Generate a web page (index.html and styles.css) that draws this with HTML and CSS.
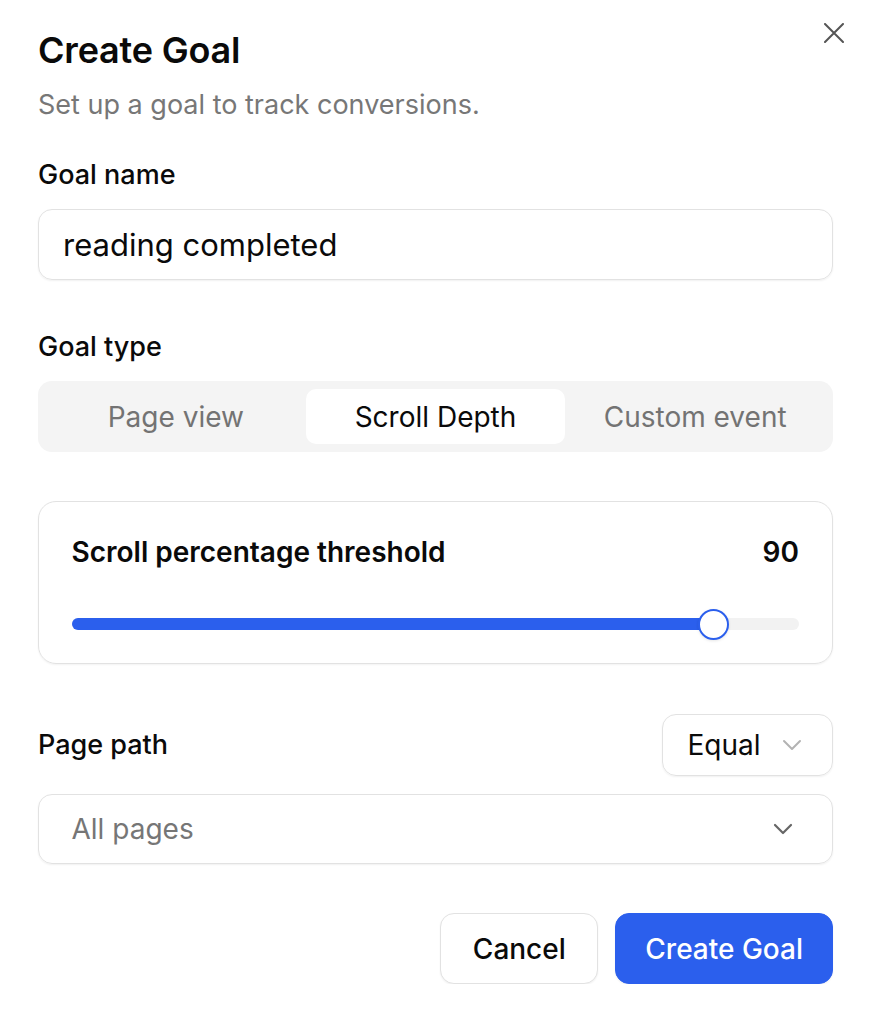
FILE: index.html
```html
<!DOCTYPE html>
<html lang="en">
<head>
<meta charset="utf-8">
<title>Create Goal</title>
<link rel="stylesheet" href="styles.css">
</head>
<body>
<div class="dialog">
  <button class="close" aria-label="Close">
    <svg width="20" height="20" viewBox="0 0 20 20" fill="none" stroke="#555" stroke-width="2" stroke-linecap="round"><path d="M1 1L19 19M19 1L1 19"/></svg>
  </button>
  <h1 class="title">Create Goal</h1>
  <p class="subtitle">Set up a goal to track conversions.</p>

  <div class="label label-name">Goal name</div>
  <div class="input">reading completed</div>

  <div class="label label-type">Goal type</div>
  <div class="segmented">
    <div class="seg">Page view</div>
    <div class="seg active">Scroll Depth</div>
    <div class="seg">Custom event</div>
  </div>

  <div class="card">
    <div class="card-head">
      <span>Scroll percentage threshold</span>
      <span>90</span>
    </div>
    <div class="slider">
      <div class="fill" style="width:88.3%"></div>
      <div class="thumb" style="left:88.3%"></div>
    </div>
  </div>

  <div class="path-row">
    <span class="label">Page path</span>
    <div class="mini-select">
      <span>Equal</span>
      <svg width="20" height="12" viewBox="0 0 20 12" fill="none" stroke="#b3b3b3" stroke-width="2" stroke-linecap="round" stroke-linejoin="round"><path d="M2 2L10 10L18 2"/></svg>
    </div>
  </div>
  <div class="select">
    <span>All pages</span>
    <svg width="20" height="12" viewBox="0 0 20 12" fill="none" stroke="#666" stroke-width="2.2" stroke-linecap="round" stroke-linejoin="round"><path d="M2 2L10 10L18 2"/></svg>
  </div>

  <div class="actions">
    <button class="btn">Cancel</button>
    <button class="btn primary">Create Goal</button>
  </div>
</div>
</body>
</html>
```

FILE: styles.css
```css
* { box-sizing: border-box; }
html, body { margin: 0; padding: 0; background: #fff; }
body {
  font-family: Inter, "Noto Sans", "Liberation Sans", sans-serif;
  color: #0a0a0a;
}
.dialog {
  position: relative;
  padding: 28px 37px 0 38px;
}
.close {
  position: absolute;
  top: 23px;
  right: 26px;
  width: 20px;
  height: 20px;
  padding: 0;
  border: 0;
  background: none;
  display: block;
}
.close svg { display: block; }
.title {
  margin: 0;
  font-size: 36px;
  line-height: 44px;
  font-weight: 600;
  letter-spacing: -0.2px;
}
.subtitle {
  margin: 15px 0 0;
  font-size: 27px;
  line-height: 36px;
  color: #777;
}
.label {
  font-size: 27px;
  line-height: 36px;
  font-weight: 500;
  color: #0a0a0a;
}
.label-name { margin-top: 34px; }
.input {
  margin-top: 16px;
  height: 71px;
  border: 1.5px solid #e2e2e2;
  border-radius: 14px;
  box-shadow: 0 1px 2px rgba(0,0,0,0.06);
  padding: 0 24px;
  display: flex;
  align-items: center;
  font-size: 31px;
}
.label-type { margin-top: 49px; }
.segmented {
  margin-top: 16px;
  height: 71px;
  background: #f4f4f4;
  border-radius: 14px;
  padding: 8px;
  display: grid;
  grid-template-columns: 1fr 1fr 1fr;
}
.seg {
  display: flex;
  align-items: center;
  justify-content: center;
  font-size: 28px;
  color: #737373;
  border-radius: 10px;
}
.seg.active {
  background: #fff;
  color: #0a0a0a;
}
.card {
  margin-top: 49px;
  height: 163px;
  border: 1.5px solid #e2e2e2;
  border-radius: 18px;
  box-shadow: 0 1px 2px rgba(0,0,0,0.05);
  padding: 32px 33px 0 32.5px;
}
.card-head {
  display: flex;
  justify-content: space-between;
  font-size: 28px;
  line-height: 36px;
  font-weight: 600;
}
.slider {
  position: relative;
  margin-top: 48px;
  height: 12px;
  border-radius: 6px;
  background: #f2f2f2;
}
.fill {
  height: 100%;
  border-radius: 6px;
  background: #2b5fed;
}
.thumb {
  position: absolute;
  top: 50%;
  width: 31px;
  height: 31px;
  margin: -15.5px 0 0 -15.5px;
  border-radius: 50%;
  background: #fff;
  border: 2px solid #2b5fed;
  box-shadow: 0 1px 3px rgba(0,0,0,0.1);
}
.path-row {
  margin-top: 50px;
  display: flex;
  justify-content: space-between;
  align-items: center;
}
.mini-select {
  width: 171px;
  height: 62px;
  border: 1.5px solid #e2e2e2;
  border-radius: 14px;
  box-shadow: 0 1px 2px rgba(0,0,0,0.06);
  display: flex;
  align-items: center;
  justify-content: space-between;
  padding: 0 30px 0 24.5px;
  font-size: 28px;
}
.select {
  margin-top: 18px;
  height: 70px;
  border: 1.5px solid #e2e2e2;
  border-radius: 14px;
  box-shadow: 0 1px 2px rgba(0,0,0,0.06);
  display: flex;
  align-items: center;
  justify-content: space-between;
  padding: 0 39px 0 32.5px;
  font-size: 28px;
  color: #767676;
}
.actions {
  margin-top: 49px;
  display: flex;
  justify-content: flex-end;
  gap: 17px;
}
.btn {
  height: 71px;
  border-radius: 14px;
  font-family: inherit;
  font-size: 28px;
  font-weight: 500;
  padding: 0 31.5px;
  border: 1.5px solid #e2e2e2;
  background: #fff;
  color: #0a0a0a;
  box-shadow: 0 1px 2px rgba(0,0,0,0.06);
}
.btn.primary {
  background: #2b5fed;
  border-color: #2b5fed;
  color: #fff;
  padding: 0 29px;
}
```
